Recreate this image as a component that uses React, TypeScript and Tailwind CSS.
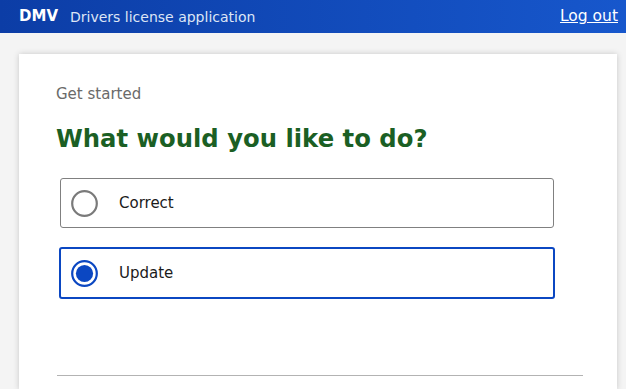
import { useState } from 'react';

const options = [
  { id: 'correct', label: 'Correct' },
  { id: 'update', label: 'Update' },
];

function RadioMark({ checked }: { checked: boolean }) {
  return (
    <svg width="27" height="27" viewBox="0 0 27 27" className="shrink-0">
      {checked ? (
        <>
          <circle cx="13.5" cy="13.5" r="12.3" fill="none" stroke="#0b47c2" strokeWidth="2.2" />
          <circle cx="13.5" cy="13.5" r="8.6" fill="#0b47c2" />
        </>
      ) : (
        <circle cx="13.5" cy="13.5" r="12.3" fill="none" stroke="#7a7a7a" strokeWidth="2.2" />
      )}
    </svg>
  );
}

export default function App() {
  const [choice, setChoice] = useState('update');

  return (
    <div className="min-h-[389px] bg-[#f4f4f4] font-['DejaVu_Sans',sans-serif]">
      <header className="h-[33px] flex items-center justify-between pl-[19px] pr-[8px] bg-gradient-to-r from-[#0c3da6] to-[#1757cc] text-white">
        <div className="flex items-center gap-[12px]">
          <span className="text-[15px] font-bold leading-none">DMV</span>
          <span className="text-[14px] text-[#dde5f5] leading-none">Drivers license application</span>
        </div>
        <a href="#" className="text-[15.5px] underline leading-none mt-[1px]">Log out</a>
      </header>

      <main className="ml-[19px] mt-[21px] w-[598px] bg-white shadow-[0_0_6px_rgba(0,0,0,0.18)] pl-[37px] pr-[34px] pt-[30px] pb-[14px]">
        <p className="text-[15px] leading-[20px] text-[#6a6a6a]">Get started</p>
        <h1 className="mt-[20px] text-[24.3px] leading-[30px] font-bold text-[#1b5f24]">What would you like to do?</h1>

        <div className="mt-[23px] ml-[3px] w-[496px] flex flex-col gap-[18px]">
          {options.map(o => {
            const checked = choice === o.id;
            return (
              <label
                key={o.id}
                onClick={() => setChoice(o.id)}
                className={
                  checked
                    ? 'h-[52px] flex items-center pl-[10px] border-2 border-[#0b47c2] rounded-[3px] cursor-pointer'
                    : 'h-[50px] m-[1px] flex items-center pl-[10px] border border-[#808080] rounded-[3px] cursor-pointer'
                }
              >
                <RadioMark checked={checked} />
                <span className="ml-[21px] text-[15px] text-[#1b1b1b]">{o.label}</span>
              </label>
            );
          })}
        </div>

        <hr className="mt-[76px] ml-[1px] border-0 h-px bg-[#b3b3b3]" />
      </main>
    </div>
  );
}
